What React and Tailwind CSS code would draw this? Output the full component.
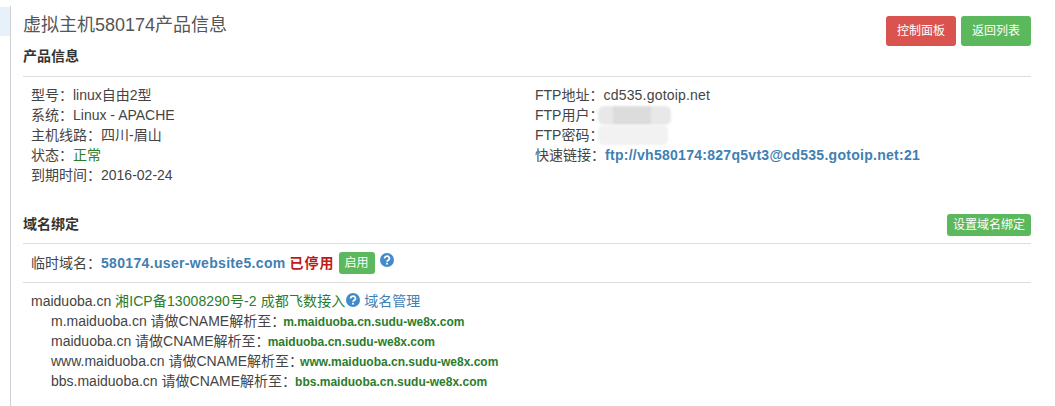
import React from 'react';

const CN_FONT = "font-['Liberation_Sans','Noto_Sans_CJK_SC',sans-serif]";

const productInfo = [
    { label: '型号：', value: 'linux自由2型' },
    { label: '系统：', value: 'Linux - APACHE' },
    { label: '主机线路：', value: '四川-眉山' },
    { label: '状态：', value: '正常', className: 'text-[#2a7d2a]' },
    { label: '到期时间：', value: '2016-02-24' },
];

const cnameRows = [
    { host: 'm.maiduoba.cn', target: 'm.maiduoba.cn.sudu-we8x.com', gap: 'ml-[-2px]' },
    { host: 'maiduoba.cn', target: 'maiduoba.cn.sudu-we8x.com', gap: 'ml-[-2px]' },
    { host: 'www.maiduoba.cn', target: 'www.maiduoba.cn.sudu-we8x.com', gap: 'ml-[-3px]' },
    { host: 'bbs.maiduoba.cn', target: 'bbs.maiduoba.cn.sudu-we8x.com', gap: 'ml-[-1px]' },
];

const HelpIcon = () => (
    <svg viewBox="0 0 14 14" className="inline-block w-[14px] h-[14px] align-[-1px]">
        <circle cx="7" cy="7" r="7" fill="#428bca" />
        <path d="M4.6 5.4a2.4 2.2 0 1 1 3.6 1.9c-.8.5-1.2.8-1.2 1.5" fill="none" stroke="#fff" strokeWidth="1.7" />
        <rect x="6.1" y="9.8" width="1.8" height="1.8" fill="#fff" />
    </svg>
);

const App = () => {
    return (
        <div className={`flex w-[1055px] h-[406px] overflow-hidden bg-white text-sm leading-5 text-[#444] ${CN_FONT}`}>
            {/* sidebar edge */}
            <div className="w-[11px] shrink-0 mt-[6px] border-r border-[#ccd2d8]">
                <div className="mt-[1px] h-[29px] bg-[#e8f1f9]"></div>
            </div>

            <div className="w-[1008px] ml-[12px]">
                {/* page header */}
                <div className="flex justify-between h-[46px]">
                    <h1 className="pt-[15px] text-lg leading-5 font-normal text-[#555]">虚拟主机580174产品信息</h1>
                    <div className="flex gap-[5px] pt-[16px]">
                        <button className="h-[30px] w-[70px] rounded-[3px] bg-[#d9534f] text-xs text-white">控制面板</button>
                        <button className="h-[30px] w-[70px] rounded-[3px] bg-[#5cb85c] text-xs text-white">返回列表</button>
                    </div>
                </div>

                <h2 className="text-sm leading-5 font-bold text-[#333] border-b border-[#ddd] h-[31px]">产品信息</h2>

                <div className="flex pt-[8px] pl-[8px] h-[137px]">
                    <div className="w-[504px]">
                        {productInfo.map((row) => (
                            <div key={row.label}>
                                {row.label}
                                <span className={row.className}>{row.value}</span>
                            </div>
                        ))}
                    </div>
                    <div>
                        <div>FTP地址：<span className="tracking-[0.2px]">cd535.gotoip.net</span></div>
                        <div className="relative">
                            FTP用户：
                            <div className="absolute left-[63px] top-[1px] w-[73px] h-[19px] rounded-md bg-[#e8e8e8] blur-[1px]">
                                <div className="ml-[15px] w-[38px] h-[19px] bg-[#dcdcdc]"></div>
                            </div>
                        </div>
                        <div className="relative">
                            FTP密码：
                            <div className="absolute left-[63px] top-[0px] w-[70px] h-[20px] rounded-md bg-[#f2f2f2] blur-[1px]"></div>
                        </div>
                        <div>
                            快速链接：
                            <a className="font-bold tracking-[0.28px] text-[#3f80b2]">ftp://vh580174:827q5vt3@cd535.gotoip.net:21</a>
                        </div>
                    </div>
                </div>

                {/* domain binding */}
                <div className="flex justify-between items-center h-[31px] border-b border-[#ddd] -mt-[1px] pb-[3px]">
                    <h2 className="font-bold text-[#333] -mt-[6px]">域名绑定</h2>
                    <button className="h-[22px] w-[84px] rounded-[3px] bg-[#5cb85c] text-xs text-white -mt-[3px]">设置域名绑定</button>
                </div>

                <div className="flex items-center h-[39px] pl-[8px] border-b border-[#ddd]">
                    <span>临时域名：</span>
                    <a className="font-bold tracking-[0.33px] text-[#3f80b2]">580174.user-website5.com</a>
                    <span className="ml-[4px] font-bold tracking-[1px] text-[#c11a1a]">已停用</span>
                    <button className="ml-[4px] h-[22px] w-[36px] rounded-[3px] bg-[#5cb85c] text-xs text-white">启用</button>
                    <span className="ml-[5px] -mt-[4px]"><HelpIcon /></span>
                </div>

                <div className="pt-[8px] pl-[8px]">
                    <div>
                        maiduoba.cn <span className="tracking-[0.1px] text-[#2a7d2a]">湘ICP备13008290号-2 成都飞数接入</span>
                        <span className="ml-[1px]"><HelpIcon /></span>{' '}
                        <a className="text-[#3f80b2]">域名管理</a>
                    </div>
                    <div className="pl-[20px]">
                        {cnameRows.map((row) => (
                            <div key={row.host}>
                                {row.host} 请做CNAME解析至：
                                <span className={`text-xs font-bold text-[#2a7d2a] ${row.gap}`}>{row.target}</span>
                            </div>
                        ))}
                    </div>
                </div>
            </div>
        </div>
    );
};

export default App;
